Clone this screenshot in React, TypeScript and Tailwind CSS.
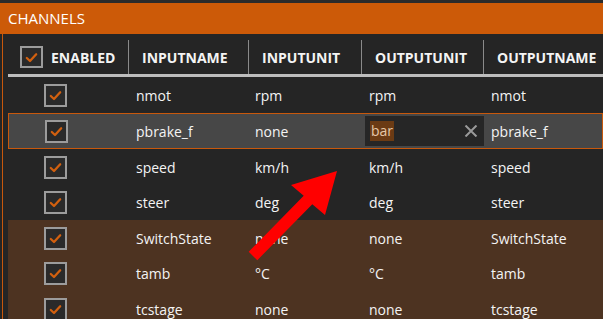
import React from 'react'

type Row = {
  name: string
  inUnit: string
  outUnit: string
  out: string
  h: string
  tone: 'dark' | 'sel' | 'brown'
}

const rows: Row[] = [
  { name: 'nmot', inUnit: 'rpm', outUnit: 'rpm', out: 'nmot', h: 'h-[36px]', tone: 'dark' },
  { name: 'pbrake_f', inUnit: 'none', outUnit: 'bar', out: 'pbrake_f', h: 'h-[36px]', tone: 'sel' },
  { name: 'speed', inUnit: 'km/h', outUnit: 'km/h', out: 'speed', h: 'h-[36px]', tone: 'dark' },
  { name: 'steer', inUnit: 'deg', outUnit: 'deg', out: 'steer', h: 'h-[35px]', tone: 'dark' },
  { name: 'SwitchState', inUnit: 'none', outUnit: 'none', out: 'SwitchState', h: 'h-[36px]', tone: 'brown' },
  { name: 'tamb', inUnit: '°C', outUnit: '°C', out: 'tamb', h: 'h-[35px]', tone: 'brown' },
  { name: 'tcstage', inUnit: 'none', outUnit: 'none', out: 'tcstage', h: 'h-[36px]', tone: 'brown' },
]

const CheckBox = ({ size = 'h-[23px] w-[23px]' }: { size?: string }) => (
  <div className={`${size} shrink-0 border-2 border-[#9c9c9c] bg-[#2a2a2a] flex items-center justify-center`}>
    <svg viewBox="0 0 16 16" className="h-[15px] w-[15px]" fill="none" stroke="#d2600f" strokeWidth="2.4" strokeLinecap="round" strokeLinejoin="round">
      <path d="M3 8.5 6.4 11.8 13 4.5" />
    </svg>
  </div>
)

const tones = {
  dark: 'bg-[#252525]',
  sel: 'bg-[#474747] border border-[#c8580c]',
  brown: 'bg-[#4d3321]',
}

export default function App() {
  return (
    <div className="relative h-[319px] w-[603px] overflow-hidden bg-[#252525] font-['Open_Sans',sans-serif] text-[14px] text-[#f4f4f4]">
      <div className="h-[3px] bg-[#2b2b2b]" />
      <div className="flex h-[31px] items-center bg-[#cc5a08] pl-[8px] text-[15px] text-white">CHANNELS</div>

      <div className="flex h-[285px]">
        <div className="w-[8px] shrink-0 pl-[2px]">
          <div className="h-full w-px bg-[#c8580c]" />
        </div>

        <div className="flex min-w-0 flex-1 flex-col">
          {/* header */}
          <div className="flex h-[40px] shrink-0 items-stretch pt-[6px] text-[14px] font-bold">
            <div className="flex w-[120px] shrink-0 items-center gap-[8px] pl-[12px]">
              <CheckBox size="h-[22px] w-[23px]" />
              <span>ENABLED</span>
            </div>
            <div className="flex w-[120px] shrink-0 items-center border-l border-[#8a8a8a] pl-[13px]">INPUTNAME</div>
            <div className="flex w-[113px] shrink-0 items-center border-l border-[#8a8a8a] pl-[13px]">INPUTUNIT</div>
            <div className="flex w-[122px] shrink-0 items-center border-l border-[#8a8a8a] pl-[13px]">OUTPUTUNIT</div>
            <div className="flex flex-1 items-center whitespace-nowrap border-l border-[#8a8a8a] pl-[13px]">OUTPUTNAME</div>
          </div>
          <div className="h-[3px] shrink-0 bg-[#bdbdbd]" />

          {rows.map((r) => (
            <div key={r.name} className={`flex shrink-0 items-center ${r.h} ${tones[r.tone]}`}>
              <div className={`flex shrink-0 items-center pl-[36px] ${r.tone === 'sel' ? 'w-[119px]' : 'w-[120px]'}`}>
                <CheckBox />
              </div>
              <div className="w-[120px] shrink-0 pl-[8px]">{r.name}</div>
              <div className="w-[113px] shrink-0 pl-[7px]">{r.inUnit}</div>
              <div className="w-[122px] shrink-0">
                {r.tone === 'sel' ? (
                  <div className="ml-[4px] flex h-[30px] w-[119px] items-center justify-between bg-[#262626] pl-[5px] pr-[6px]">
                    <span className="bg-[#6b3b14] px-px leading-[20px] text-[#e6c8a8]">bar</span>
                    <svg viewBox="0 0 14 12" className="h-[12px] w-[14px]" stroke="#9a9a9a" strokeWidth="2" fill="none">
                      <path d="M1.5 0.5 12.5 11.5M12.5 0.5 1.5 11.5" />
                    </svg>
                  </div>
                ) : (
                  <span className="pl-[8px]">{r.outUnit}</span>
                )}
              </div>
              <div className="flex-1 whitespace-nowrap pl-[8px]">{r.out}</div>
            </div>
          ))}
        </div>
      </div>

      {/* annotation arrow */}
      <svg className="pointer-events-none absolute left-0 top-0" width="603" height="319" viewBox="0 0 603 319">
        <polygon
          points="248.7,251.8 257.3,260.2 312.3,204.2 325,215 337,171 291,185 303.7,195.8"
          fill="#ff0000"
        />
      </svg>
    </div>
  )
}
